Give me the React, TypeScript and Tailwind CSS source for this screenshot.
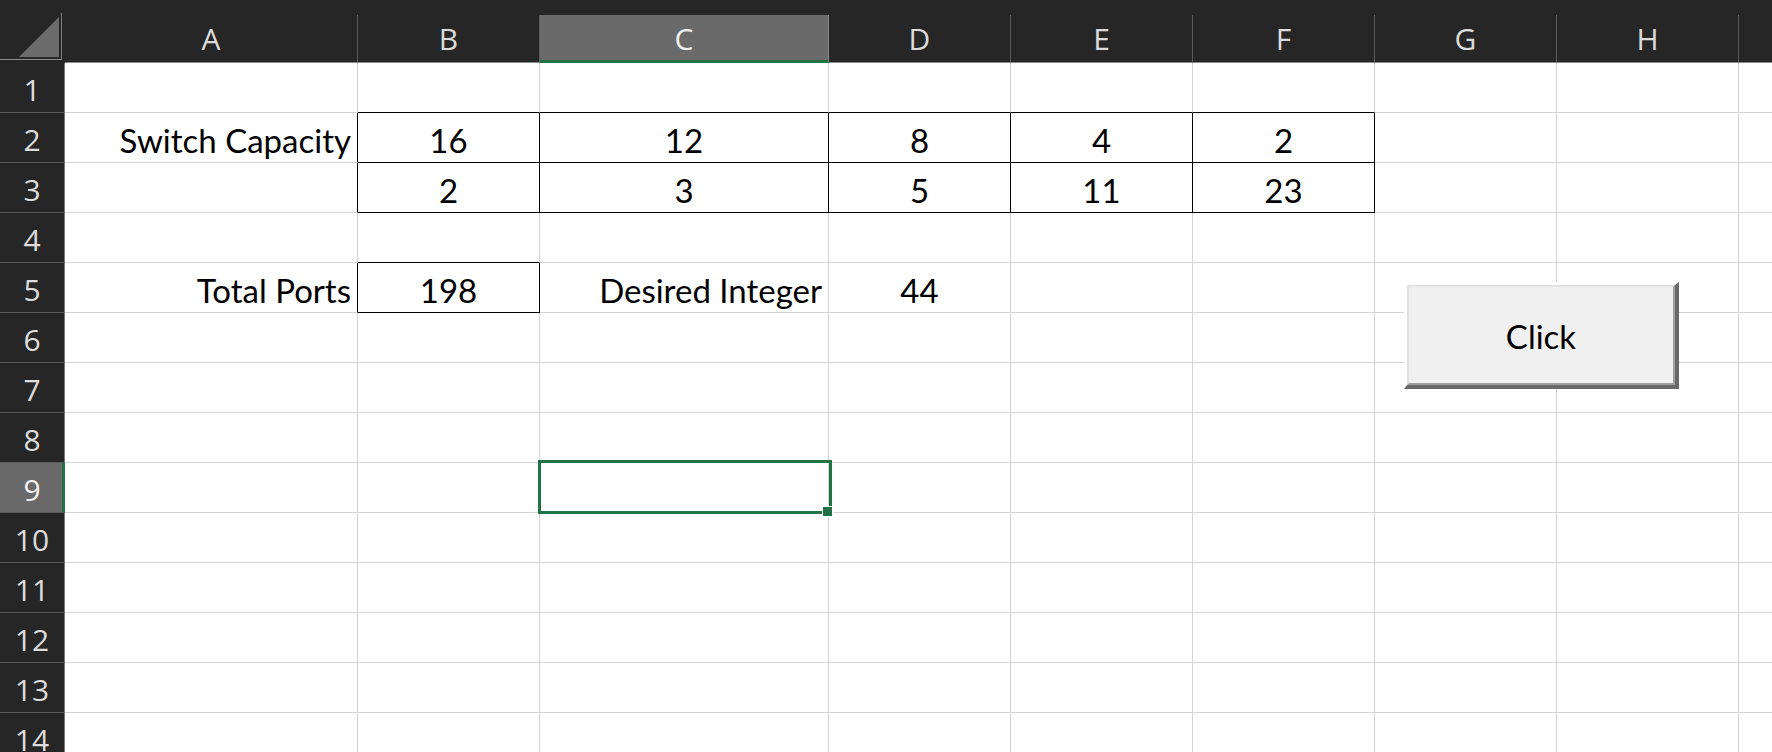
import React from "react";

const COLS = ["A", "B", "C", "D", "E", "F", "G", "H", "I"];
const ROWS = Array.from({ length: 14 }, (_, i) => i + 1);

type CellData = { text: string; align: "right" | "center" };

const DATA: Record<string, CellData> = {
  A2: { text: "Switch Capacity", align: "right" },
  B2: { text: "16", align: "center" },
  C2: { text: "12", align: "center" },
  D2: { text: "8", align: "center" },
  E2: { text: "4", align: "center" },
  F2: { text: "2", align: "center" },
  B3: { text: "2", align: "center" },
  C3: { text: "3", align: "center" },
  D3: { text: "5", align: "center" },
  E3: { text: "11", align: "center" },
  F3: { text: "23", align: "center" },
  A5: { text: "Total Ports", align: "right" },
  B5: { text: "198", align: "center" },
  C5: { text: "Desired Integer", align: "right" },
  D5: { text: "44", align: "center" },
};

function bordered(c: number, r: number): boolean {
  if (r >= 2 && r <= 3 && c >= 1 && c <= 5) return true;
  if (r === 5 && c === 1) return true;
  return false;
}

const cellFont = { fontFamily: "Lato, 'Noto Sans', sans-serif" };
const headFont = { fontFamily: "'Open Sans', 'Noto Sans', sans-serif" };

function ColHeader({ label, selected }: { label: string; selected: boolean }) {
  return (
    <div className="flex flex-col bg-[#262626] pt-[15px]">
      <div
        className={
          selected
            ? "flex flex-1 items-center justify-center bg-[#6a6a6a] border-r border-r-[#8a8a8a] border-b-[3px] border-b-[#217346] text-[30px] font-normal leading-none text-[#f0f0f0] pt-[2px]"
            : "flex flex-1 items-center justify-center border-r border-r-[#5a5a5a] border-b border-b-[#8c8c8c] text-[30px] font-normal leading-none text-[#dcdcdc]"
        }
        style={headFont}
      >
        {label}
      </div>
    </div>
  );
}

function RowHeader({ n, selected }: { n: number; selected: boolean }) {
  return (
    <div
      className={
        selected
          ? "flex items-center justify-center bg-[#6a6a6a] border-b border-b-[#5a5a5a] border-r-[3px] border-r-[#217346] text-[30px] font-normal leading-none text-[#f4f4f4] pt-[4px] pl-[2px]"
          : "flex items-center justify-center bg-[#262626] border-b border-b-[#5a5a5a] border-r border-r-[#7a7a7a] text-[30px] font-normal leading-none text-[#dcdcdc] pt-[4px]"
      }
      style={headFont}
    >
      {n}
    </div>
  );
}

function BodyCell({ c, r }: { c: number; r: number }) {
  const key = `${COLS[c]}${r}`;
  const d = DATA[key];
  const rightBlack = bordered(c, r) || bordered(c + 1, r);
  const bottomBlack = bordered(c, r) || bordered(c, r + 1);
  const cls = [
    "flex items-center bg-white border-r border-b px-[6px] pt-[6px] text-[33px] leading-none text-black whitespace-nowrap overflow-visible",
    rightBlack ? "border-r-black" : "border-r-[#d4d4d4]",
    bottomBlack ? "border-b-black" : "border-b-[#d4d4d4]",
    d && d.align === "right" ? "justify-end" : "justify-center",
  ].join(" ");
  return (
    <div className={cls} style={cellFont}>
      {d ? d.text : null}
    </div>
  );
}

export default function App() {
  return (
    <div className="relative h-[752px] w-[1772px] overflow-hidden bg-white">
      <div className="grid w-[1921px] grid-cols-[65px_293px_182px_289px_182px_182px_182px_182px_182px_182px] grid-rows-[63px_repeat(14,50px)]">
        {/* corner */}
        <div className="flex items-end justify-end bg-[#262626] pr-[3px] pb-[3px]">
          <div className="flex h-[47px] w-full items-end justify-end border-r border-r-[#7a7a7a] border-b border-b-[#8c8c8c] pr-[2px] pb-[2px]">
            <svg width="40" height="40" viewBox="0 0 40 40">
              <polygon points="40,0 40,40 0,40" fill="#6b6b6b" />
            </svg>
          </div>
        </div>
        {COLS.map((l) => (
          <ColHeader key={l} label={l === "I" ? "" : l} selected={l === "C"} />
        ))}
        {ROWS.map((r) => (
          <React.Fragment key={r}>
            <RowHeader n={r} selected={r === 9} />
            {COLS.map((_, c) => (
              <BodyCell key={c} c={c} r={r} />
            ))}
          </React.Fragment>
        ))}
      </div>

      {/* selected cell C9 */}
      <div className="absolute left-[538px] top-[460px] h-[54px] w-[294px] border-[3px] border-[#217346]" />
      <div className="absolute left-[822px] top-[506px] h-[11px] w-[11px] border border-white bg-[#217346]" />

      {/* Form button */}
      <div className="absolute left-[1404px] top-[282px] flex h-[107px] w-[275px] border-t-[3px] border-l-[3px] border-t-white border-l-white border-r-[4px] border-b-[4px] border-r-[#696969] border-b-[#696969]">
        <div
          className="flex flex-1 items-center justify-center border-t-2 border-l-2 border-t-[#e3e3e3] border-l-[#e3e3e3] border-r-2 border-b-2 border-r-[#a0a0a0] border-b-[#a0a0a0] bg-[#f0f0f0] text-[33px] leading-none text-black pt-[2px]"
          style={cellFont}
        >
          Click
        </div>
      </div>
    </div>
  );
}
